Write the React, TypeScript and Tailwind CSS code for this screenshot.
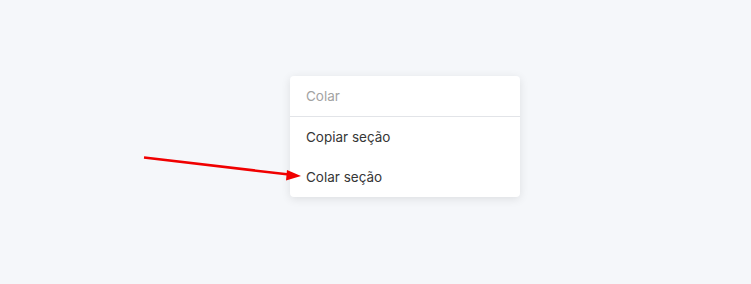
export default function App() {
  return (
    <div className="relative w-[751px] h-[284px] bg-[#f5f7fa]" style={{ fontFamily: "Inter, 'Noto Sans', sans-serif" }}>
      <div className="absolute left-[290px] top-[76px] w-[230px] bg-white rounded-[4px] shadow-[0_2px_10px_rgba(0,0,0,0.10)]">
        <div className="h-[40px] flex items-center pl-4 pt-[1px] text-[13.5px] text-[#a3a3a3]">Colar</div>
        <div className="h-px bg-[#e2e4e8]" />
        <div className="h-[40px] flex items-center pl-4 pt-[1px] text-[13.5px] text-[#363636]">Copiar seção</div>
        <div className="h-[40px] flex items-center pl-4 pt-[1px] text-[13.5px] text-[#363636]">Colar seção</div>
      </div>
      <svg className="absolute left-0 top-0" width="751" height="284">
        <line x1="144" y1="157.5" x2="289" y2="174.5" stroke="#f00000" strokeWidth="2.5" />
        <polygon points="301,176 287,170 286,180.5" fill="#f00000" />
      </svg>
    </div>
  );
}
